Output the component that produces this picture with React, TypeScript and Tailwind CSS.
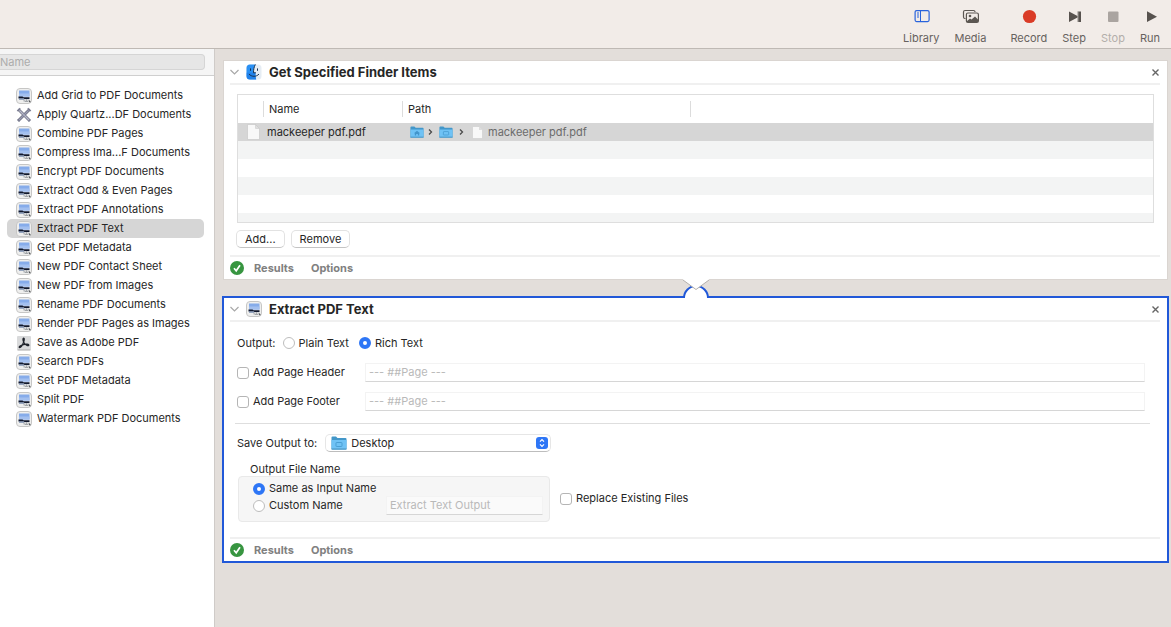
import type { ReactNode } from "react"

type IconKind = "preview" | "quartz" | "adobe"

interface ActionType {
  name: string
  icon?: IconKind
}

const actions: ActionType[] = [
  { name: "Add Grid to PDF Documents" },
  { name: "Apply Quartz...DF Documents", icon: "quartz" },
  { name: "Combine PDF Pages" },
  { name: "Compress Ima...F Documents" },
  { name: "Encrypt PDF Documents" },
  { name: "Extract Odd & Even Pages" },
  { name: "Extract PDF Annotations" },
  { name: "Extract PDF Text" },
  { name: "Get PDF Metadata" },
  { name: "New PDF Contact Sheet" },
  { name: "New PDF from Images" },
  { name: "Rename PDF Documents" },
  { name: "Render PDF Pages as Images" },
  { name: "Save as Adobe PDF", icon: "adobe" },
  { name: "Search PDFs" },
  { name: "Set PDF Metadata" },
  { name: "Split PDF" },
  { name: "Watermark PDF Documents" },
]

const PreviewIcon = () => (
  <svg className="size-4 shrink-0" viewBox="0 0 16 16" aria-hidden="true">
    <rect x="0.5" y="0.5" width="15" height="15" rx="3.5" fill="#efefee" stroke="#c6c6c5" />
    <rect x="3" y="2.5" width="10.5" height="6" fill="#86acea" />
    <rect x="3" y="5.5" width="10.5" height="3" fill="#a3c0ef" />
    <path d="M2.5 8.6h4l1 .6h6v1.9h-5l-1-.6h-5z" fill="#10182e" />
    <path d="M3 10.5h5v1.2H3z" fill="#7288ae" />
    <path d="M8 11h5.5v3H8z" fill="#d4d6d8" />
    <path d="M8 11.5v2M10.5 11.3v1.6M9 13.5h3" stroke="#8b8f94" strokeWidth="0.7" />
    <path d="M13 12.5l1.3 1.8" stroke="#3b3d40" strokeWidth="1.1" />
  </svg>
)

const QuartzIcon = () => (
  <svg className="size-4 shrink-0" viewBox="0 0 16 16" aria-hidden="true">
    <path d="M3 3l10 10M13 3L3 13" stroke="#5d5f73" strokeWidth="2.8" strokeLinecap="round" />
    <path d="M3 3l10 10" stroke="#b8bacc" strokeWidth="1.5" strokeLinecap="round" />
    <path d="M13 3L3 13" stroke="#9a9cb2" strokeWidth="1.5" strokeLinecap="round" />
    <path d="M1 3.5Q3 4.5 4 1M15 3.5Q13 4.5 12 1M1.5 12.5l2 2M14.5 12.5l-2 2" fill="none" stroke="#7c7e92" strokeWidth="1.2" />
  </svg>
)

const AdobeIcon = () => (
  <svg className="size-4 shrink-0" viewBox="0 0 16 16" aria-hidden="true">
    <rect x="1" y="1" width="14" height="14" rx="1" fill="#d9dadb" />
    <path d="M1.5 15h13" stroke="#aaa" />
    <path
      d="M7.5 3.2c1.3 0 .6 2.5 0 4.2C6.6 9.8 4.7 12.7 3.5 12.5c-1-.3.5-2 4-2.9 3.2-.8 5.4-.3 5.3.6-.1 1-2.6.3-4-1.3C7.3 7.3 6.4 3.4 7.5 3.2z"
      fill="none"
      stroke="#20242c"
      strokeWidth="1.3"
    />
  </svg>
)

const FinderIcon = () => (
  <svg className="size-4 shrink-0" viewBox="0 0 16 16" aria-hidden="true">
    <rect x="0.5" y="0.5" width="15" height="15" rx="3.5" fill="#e6edf4" />
    <path d="M4 .5h5.2C8 3 7.5 5.5 7.5 8.8h2c0 2.5.2 4.5.7 6.7H4A3.5 3.5 0 0 1 .5 12V4A3.5 3.5 0 0 1 4 .5z" fill="#2a90f4" />
    <path d="M.5 8.8h9c0 2.5.2 4.5.7 6.7H4A3.5 3.5 0 0 1 .5 12z" fill="#1774df" opacity="0.5" />
    <path d="M4.5 4.8v1.6M11.5 4.8v1.6M3.3 10.4c2.5 2.6 6.900 2.6 9.4 0M9.2.8C8 3 7.5 5.5 7.5 8.8h2" fill="none" stroke="#17304e" strokeWidth="1" strokeLinecap="round" />
  </svg>
)

const FolderIcon = ({ className, home }: { className: string; home?: boolean }) => (
  <svg className={className} viewBox="0 0 16 14" preserveAspectRatio="none" aria-hidden="true">
    <path d="M.5 1.5Q.5.5 1.5.5H5l1.5 1.5h8q1 0 1 1v9.5q0 1-1 1h-13q-1 0-1-1z" fill="#4397c9" />
    <path d="M.5 4h15v8.5q0 1-1 1h-13q-1 0-1-1z" fill="#6fc2f5" />
    <path d="M.5 13h15" stroke="#4a93bf" />
    {home ? (
      <path d="M8 5.5l3.5 3h-1V11H9V9.200H7V11H5.5V8.5h-1z" fill="#4395cb" />
    ) : (
      <rect x="5" y="6.5" width="6" height="4" rx="0.5" fill="none" stroke="#4a9fd4" />
    )}
  </svg>
)

const FileIcon = () => (
  <svg className="w-[13px] h-4 shrink-0" viewBox="0 0 13 16" aria-hidden="true">
    <path d="M.5.5h8l4 4v11H.5z" fill="#f8f8f8" stroke="#c8c8c8" strokeWidth="0.7" />
    <path d="M8.5.5v4h4z" fill="#dedede" stroke="#c4c4c4" strokeWidth="0.5" />
  </svg>
)

const PathArrow = () => (
  <svg className="w-[5px] h-2 shrink-0" viewBox="0 0 5 8" aria-hidden="true">
    <path d="M1 1.5L3.5 4 1 6.5" fill="none" stroke="#4a4a4a" strokeWidth="1.3" />
  </svg>
)

const actionIcons: Record<IconKind, ReactNode> = {
  preview: <PreviewIcon />,
  quartz: <QuartzIcon />,
  adobe: <AdobeIcon />,
}

interface ToolbarButtonProps {
  label: string
  disabled?: boolean
  className?: string
  children: ReactNode
}

const ToolbarButton = ({ label, disabled, className = "", children }: ToolbarButtonProps) => (
  <button
    type="button"
    disabled={disabled}
    className={`flex flex-col items-center gap-[7px] text-[#67625e] disabled:text-[#b3aeaa] ${className}`}
  >
    <svg className="w-[18px] h-4" viewBox="0 0 18 16" aria-hidden="true">
      {children}
    </svg>
    <span>{label}</span>
  </button>
)

const Toolbar = () => (
  <header className="flex justify-end items-start gap-[15px] h-[49px] pt-2 pr-[11px] shrink-0 bg-[#f2ece8] border-b border-[#bfb9b4]">
    <ToolbarButton label="Library">
      <rect x="3.1" y="2.6" width="14" height="11" rx="1.5" fill="none" stroke="#2963dc" strokeWidth="1.2" />
      <path d="M8.5 2.5v11M5 5h2M5 7h2M5 9h2" stroke="#2963dc" />
    </ToolbarButton>
    <ToolbarButton label="Media" className="mr-[9px]">
      <path d="M4.5 10.5H4A1.5 1.5 0 0 1 2.500 9V4A1.5 1.5 0 0 1 4 2.5h8.5A1.5 1.5 0 0 1 14 4" fill="none" stroke="#5c5752" strokeWidth="1.2" />
      <rect x="5.4" y="5" width="12" height="9.5" rx="1.5" fill="#f2ece8" stroke="#5c5752" strokeWidth="1.2" />
      <circle cx="9" cy="8" r="1.3" fill="#5c5752" />
      <path d="M6 13l3-2.5 1.5 1L14 8.5l3 3V14H6z" fill="#5c5752" />
    </ToolbarButton>
    <ToolbarButton label="Record">
      <circle cx="9.5" cy="8.5" r="6.6" fill="#da3b26" />
    </ToolbarButton>
    <ToolbarButton label="Step">
      <path d="M4 3.5L12.500 8V3.500H16v10.500h-3.500V9.500L4 14z" fill="#57524e" />
      <path d="M12.9 3.5v10.5" stroke="#f2ece8" strokeWidth="0.6" />
    </ToolbarButton>
    <ToolbarButton label="Stop" disabled>
      <rect x="4" y="3.5" width="10.5" height="10.5" rx="1" fill="#aaa4a0" />
    </ToolbarButton>
    <ToolbarButton label="Run">
      <path d="M6 3.3l10 5.4-10 5.4z" fill="#57524e" />
    </ToolbarButton>
  </header>
)

const Sidebar = () => (
  <aside className="w-[215px] shrink-0 bg-white border-r border-[#cfcbc8]">
    <div className="h-[27px] pt-[5px] pr-[9px] bg-[#f5f5f5] border-b border-[#cfcfcf]">
      <input
        type="search"
        aria-label="Name"
        placeholder="Name"
        className="block w-full h-4 rounded-r-[4px] border border-l-0 border-[#d5d5d5] bg-[#e6e6e6] placeholder:text-[#acacac] outline-none"
      />
    </div>
    <ul className="pt-[10px] pl-[7px] pr-[10px]">
      {actions.map(({ name, icon = "preview" }) => (
        <li
          key={name}
          className={`flex items-center gap-[5px] h-[19px] pl-[9px] rounded-[5px] whitespace-nowrap ${
            name === "Extract PDF Text" ? "bg-[#d6d6d6]" : ""
          }`}
        >
          {actionIcons[icon]}
          <span>{name}</span>
        </li>
      ))}
    </ul>
  </aside>
)

const CardHeader = ({ title, icon }: { title: string; icon: ReactNode }) => (
  <div className="flex items-center h-6 ml-[6px] mr-[7px] border-b-2 border-[#f0f0f0]">
    <svg className="w-[9px] h-2" viewBox="0 0 9 8" aria-hidden="true">
      <path d="M.5 2l4 4 4-4" fill="none" stroke="#a8a8a8" strokeWidth="1.2" />
    </svg>
    <span className="mx-[7px]">{icon}</span>
    <h2 className="text-[13px] font-bold">{title}</h2>
    <button type="button" aria-label={`Remove ${title}`} className="ml-auto">
      <svg className="size-[9px]" viewBox="0 0 9 9" aria-hidden="true">
        <path d="M1.5 1.5l6 6M7.5 1.5l-6 6" stroke="#666" strokeWidth="1.4" />
      </svg>
    </button>
  </div>
)

const CardFooter = () => (
  <div className="flex items-center h-6 ml-[6px] mr-[7px] border-t-2 border-[#f0f0f0] font-bold text-[#808080]">
    <svg className="size-[14px] mr-[10px]" viewBox="0 0 14 14" aria-hidden="true">
      <circle cx="7" cy="7" r="7" fill="#379540" />
      <path d="M4 7.3L6.2 9.8 10 4.3" fill="none" stroke="white" strokeWidth="1.7" />
    </svg>
    <button type="button" className="mr-[17px]">
      Results
    </button>
    <button type="button">Options</button>
  </div>
)

const pushButtonClass = "h-[18px] px-2 rounded-[5px] border border-[#e2e2e2] border-b-[#c4c4c4]"

const FinderItemsCard = () => (
  <section className="mx-px bg-white border border-[#dad5d1]">
    <CardHeader title="Get Specified Finder Items" icon={<FinderIcon />} />
    <div className="h-[129px] mt-[9px] mx-[13px] border border-[#dedede] overflow-hidden">
      <table className="w-full table-fixed border-collapse">
        <thead>
          <tr className="h-[28px] text-left leading-[17px]">
            <th className="w-[26px] p-0">
              <span className="block h-4 border-r border-[#dcdcdc]" />
            </th>
            <th className="w-[139px] p-0 font-normal">
              <span className="block h-4 pl-[5px] border-r border-[#dcdcdc]">Name</span>
            </th>
            <th className="w-[288px] p-0 font-normal">
              <span className="block h-4 pl-[5px] border-r border-[#dcdcdc]">Path</span>
            </th>
            <th className="p-0" />
          </tr>
        </thead>
        <tbody>
          <tr className="h-[18px] bg-[#d6d6d6]">
            <td className="p-0 pl-[9px]">
              <FileIcon />
            </td>
            <td className="p-0 pl-[3px]">mackeeper pdf.pdf</td>
            <td className="p-0">
              <div className="flex items-center pl-[7px] text-[#6b6b6b]">
                <FolderIcon className="w-[14px] h-3 mr-1" home />
                <PathArrow />
                <FolderIcon className="w-[14px] h-3 mx-[6px]" />
                <PathArrow />
                <span className="flex items-center gap-[5px] ml-2">
                  <svg className="w-[11px] h-[13px]" viewBox="0 0 11 13" aria-hidden="true">
                    <path d="M.5.5h6.500l3.500 3.500v8.500H.5z" fill="#f8f8f8" stroke="#ccc" strokeWidth="0.6" />
                    <path d="M7 .5V4h3.500z" fill="#ddd" />
                  </svg>
                  mackeeper pdf.pdf
                </span>
              </div>
            </td>
            <td className="p-0" />
          </tr>
          {[1, 2, 3, 4, 5].map((row) => (
            <tr key={row} className="h-[18px] odd:bg-white even:bg-[#f3f4f4]">
              <td className="p-0" colSpan={4} />
            </tr>
          ))}
        </tbody>
      </table>
    </div>
    <div className="flex gap-[6px] h-8 pt-[7px] px-3">
      <button type="button" className={pushButtonClass}>
        Add...
      </button>
      <button type="button" className={pushButtonClass}>
        Remove
      </button>
    </div>
    <CardFooter />
  </section>
)

const radioClass =
  "appearance-none size-3 shrink-0 rounded-full border border-[#bdbdbd] bg-white checked:border-4 checked:border-[#2e76f6]"
const checkboxClass =
  "appearance-none size-3 shrink-0 rounded-[3px] border border-[#b5b5b5] bg-white checked:bg-[#2e76f6]"
const fieldClass =
  "block h-[19px] px-[3px] pb-px border border-[#f3f3f3] border-b-[#d6d6d6] placeholder:text-[#b9b9b9] outline-none"

const PageField = ({ id, label }: { id: string; label: string }) => (
  <div className="flex items-center h-[29px]">
    <label className="flex items-center gap-1 w-[128px]">
      <input type="checkbox" className={checkboxClass} />
      {label}
    </label>
    <input
      id={id}
      type="text"
      aria-label={`${label} text`}
      placeholder="--- ##Page ---"
      className={`${fieldClass} flex-1`}
    />
  </div>
)

const ExtractTextCard = () => (
  <section className="relative bg-white border-2 border-[#2158d8]">
    {/* joins this action to the output of the one above */}
    <svg className="absolute -top-[19px] left-1/2 -translate-x-1/2 w-[29px] h-[21px]" viewBox="0 0 29 21" aria-hidden="true">
      <path d="M2.5 21v-2a12 12 0 0 1 24 0v2z" fill="white" />
      <path d="M2.5 19a12 12 0 0 1 24 0" fill="none" stroke="#2158d8" strokeWidth="2" />
      <path d="M1.5 1V0h26v1l-13 9.5z" fill="white" />
      <path d="M1.5 1l13 9.5L27.5 1" fill="none" stroke="#b4b0ad" />
    </svg>
    <CardHeader title="Extract PDF Text" icon={<PreviewIcon />} />
    <div className="pt-3 pl-[13px] pr-[22px]">
      <div className="flex items-center h-[18px] mb-[6px]">
        <span className="mr-[7px]">Output:</span>
        <label className="flex items-center gap-1 mr-[10px]">
          <input type="radio" name="output" className={radioClass} />
          Plain Text
        </label>
        <label className="flex items-center gap-1">
          <input type="radio" name="output" defaultChecked className={radioClass} />
          Rich Text
        </label>
      </div>
      <PageField id="page-header" label="Add Page Header" />
      <PageField id="page-footer" label="Add Page Footer" />
    </div>
    <hr className="mt-[7px] ml-[11px] mr-[17px] border-[#dedede]" />
    <div className="flex items-center gap-2 mt-[10px] pl-[13px]">
      <label htmlFor="save-output">Save Output to:</label>
      <div className="relative w-[226px]">
        <FolderIcon className="absolute left-[6px] top-[2px] w-4 h-[14px]" />
        <select
          id="save-output"
          className="appearance-none block w-full h-[18px] pl-[25px] rounded-[5px] border border-[#e6e6e6] border-b-[#bdbdbd] outline-none"
        >
          <option>Desktop</option>
        </select>
        <svg className="absolute right-[3px] top-[3px] size-3 pointer-events-none" viewBox="0 0 12 12" aria-hidden="true">
          <rect width="12" height="12" rx="3" fill="#2e76f6" />
          <path d="M4 4.7l2-2 2 2M4 7.3l2 2 2-2" fill="none" stroke="white" strokeWidth="1.2" />
        </svg>
      </div>
    </div>
    <div className="flex items-end gap-[10px] mt-[9px] mb-[15px] pl-[14px]">
      <fieldset className="w-[312px]">
        <legend className="h-[15px] pl-3 leading-[17px]">Output File Name</legend>
        <div className="h-[46px] pt-[3px] pl-[14px] pr-[6px] rounded-[4px] border border-[#e9e9e9] bg-[#f6f6f6] leading-[17px]">
          <label className="flex items-center gap-1 h-[17px]">
            <input type="radio" name="file-name" defaultChecked className={radioClass} />
            Same as Input Name
          </label>
          <div className="flex items-center justify-between h-[17px]">
            <label className="flex items-center gap-1">
              <input type="radio" name="file-name" className={radioClass} />
              Custom Name
            </label>
            <input
              type="text"
              aria-label="Custom file name"
              placeholder="Extract Text Output"
              className={`${fieldClass} w-[157px] bg-[#fafafa]`}
            />
          </div>
        </div>
      </fieldset>
      <label className="flex items-center gap-1 mb-4">
        <input type="checkbox" className={checkboxClass} />
        Replace Existing Files
      </label>
    </div>
    <CardFooter />
  </section>
)

const App = () => {
  return (
    <div className="flex flex-col min-h-screen bg-[#e3deda] font-['Inter',sans-serif] text-[11px] leading-[15px] text-[#262626]">
      <Toolbar />
      <div className="flex flex-1">
        <Sidebar />
        <main className="flex flex-col flex-1 gap-4 min-w-0 pt-[11px] pl-[7px] pr-[2px]">
          <FinderItemsCard />
          <ExtractTextCard />
        </main>
      </div>
    </div>
  )
}

export default App
